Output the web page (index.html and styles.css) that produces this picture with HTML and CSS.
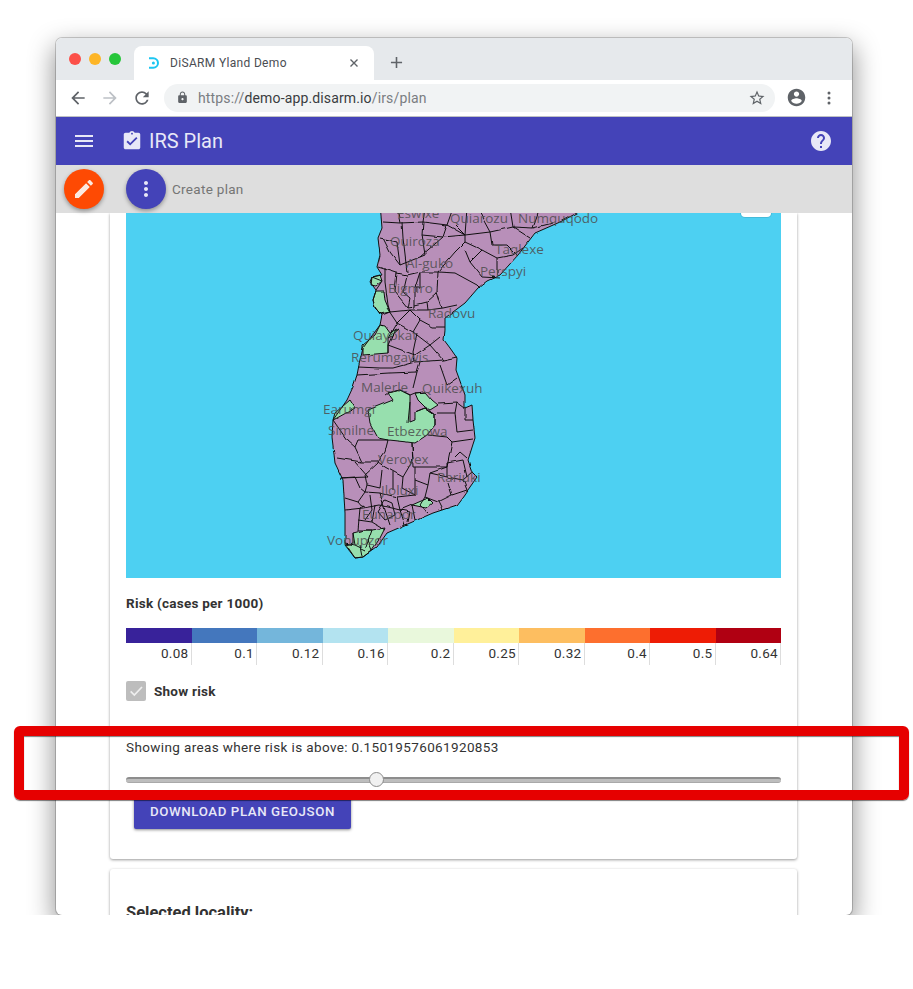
FILE: index.html
```html
<!DOCTYPE html>
<html lang="en">
<head>
<meta charset="utf-8">
<title>DiSARM Yland Demo</title>
<link rel="stylesheet" href="styles.css">
</head>
<body>
<div class="stage">
  <div class="window">
    <div class="titlebar">
      <div class="lights"><span class="light red"></span><span class="light amber"></span><span class="light green"></span></div>
      <div class="tab">
        <svg class="favicon" viewBox="0 0 12 12"><path d="M1 1.2h4.2a4.8 4.8 0 0 1 0 9.6H1" fill="none" stroke="#1cc6f2" stroke-width="2"/><circle cx="5.4" cy="6" r="1.5" fill="#1cc6f2"/></svg>
        <span class="tab-title">DiSARM Yland Demo</span>
        <svg class="tab-close" viewBox="0 0 10 10"><path d="M1.5 1.5l7 7M8.5 1.5l-7 7" stroke="#5f6368" stroke-width="1.4"/></svg>
      </div>
      <svg class="new-tab" viewBox="0 0 14 14"><path d="M7 1v12M1 7h12" stroke="#5f6368" stroke-width="1.7"/></svg>
    </div>
    <div class="toolbar">
      <svg class="nav-icon" viewBox="0 0 24 24"><path fill="#5f6368" d="M20 11H7.83l5.59-5.59L12 4l-8 8 8 8 1.41-1.41L7.83 13H20v-2z"/></svg>
      <svg class="nav-icon" viewBox="0 0 24 24"><path fill="#bdc1c6" d="M12 4l-1.41 1.41L16.17 11H4v2h12.17l-5.58 5.59L12 20l8-8z"/></svg>
      <svg class="nav-icon" viewBox="0 0 24 24"><path fill="#5f6368" d="M17.65 6.35C16.2 4.9 14.21 4 12 4c-4.42 0-7.99 3.58-7.99 8s3.57 8 7.99 8c3.73 0 6.84-2.55 7.73-6h-2.08c-.82 2.33-3.04 4-5.65 4-3.31 0-6-2.69-6-6s2.69-6 6-6c1.66 0 3.14.69 4.22 1.78L13 11h7V4l-2.35 2.35z"/></svg>
      <div class="omnibox">
        <svg class="lock" viewBox="0 0 24 24"><path fill="#5f6368" d="M18 8h-1V6c0-2.76-2.24-5-5-5S7 3.24 7 6v2H6c-1.1 0-2 .9-2 2v10c0 1.1.9 2 2 2h12c1.1 0 2-.9 2-2V10c0-1.1-.9-2-2-2zm-6 9c-1.1 0-2-.9-2-2s.9-2 2-2 2 .9 2 2-.9 2-2 2zm3.1-9H8.9V6c0-1.71 1.39-3.1 3.1-3.1 1.71 0 3.1 1.39 3.1 3.1v2z"/></svg>
        <span class="url"><span class="url-dim">https://</span>demo-app.disarm.io<span class="url-dim">/irs/plan</span></span>
        <svg class="star" viewBox="0 0 24 24"><path fill="#5f6368" d="M22 9.24l-7.19-.62L12 2 9.19 8.63 2 9.24l5.46 4.73L5.82 21 12 17.27 18.18 21l-1.63-7.03L22 9.24zM12 15.4l-3.76 2.27 1-4.28-3.32-2.88 4.38-.38L12 6.1l1.71 4.04 4.38.38-3.32 2.88 1 4.28L12 15.4z"/></svg>
      </div>
      <svg class="account" viewBox="0 0 24 24"><path fill="#5f6368" d="M12 2C6.48 2 2 6.48 2 12s4.48 10 10 10 10-4.48 10-10S17.52 2 12 2zm0 3c1.66 0 3 1.34 3 3s-1.34 3-3 3-3-1.34-3-3 1.34-3 3-3zm0 14.2c-2.5 0-4.71-1.28-6-3.22.03-1.99 4-3.08 6-3.08 1.99 0 5.97 1.09 6 3.08-1.29 1.94-3.5 3.22-6 3.22z"/></svg>
      <svg class="dots" viewBox="0 0 4 14"><circle cx="2" cy="2" r="1.5" fill="#5f6368"/><circle cx="2" cy="7" r="1.5" fill="#5f6368"/><circle cx="2" cy="12" r="1.5" fill="#5f6368"/></svg>
    </div>
    <header class="appbar">
      <svg class="menu-icon" viewBox="0 0 24 24"><path fill="#e8e8f7" d="M3 18h18v-2H3v2zm0-5h18v-2H3v2zm0-7v2h18V6H3z"/></svg>
      <svg class="plan-icon" viewBox="0 0 24 24"><path fill="#e8e8f7" d="M19 3h-4.18C14.4 1.84 13.3 1 12 1c-1.3 0-2.4.84-2.82 2H5c-1.1 0-2 .9-2 2v14c0 1.1.9 2 2 2h14c1.1 0 2-.9 2-2V5c0-1.1-.9-2-2-2zm-7 0c.55 0 1 .45 1 1s-.45 1-1 1-1-.45-1-1 .45-1 1-1zm-2 14l-4-4 1.41-1.41L10 14.17l6.59-6.59L18 9l-8 8z"/></svg>
      <span class="app-title">IRS Plan</span>
      <svg class="help-icon" viewBox="0 0 24 24"><path fill="#e8e8f7" d="M12 2C6.48 2 2 6.48 2 12s4.48 10 10 10 10-4.48 10-10S17.52 2 12 2zm1 17h-2v-2h2v2zm2.07-7.75l-.9.92C13.45 12.9 13 13.5 13 15h-2v-.5c0-1.1.45-2.1 1.17-2.83l1.24-1.26c.37-.36.59-.86.59-1.41 0-1.1-.9-2-2-2s-2 .9-2 2H8c0-2.21 1.79-4 4-4s4 1.79 4 4c0 .88-.36 1.68-.93 2.25z"/></svg>
    </header>
    <div class="actionbar">
      <button class="fab fab-edit"><svg viewBox="0 0 24 24"><path fill="#fbe9e0" d="M3 17.25V21h3.75L17.81 9.94l-3.75-3.75L3 17.25zM20.71 7.04c.39-.39.39-1.02 0-1.41l-2.34-2.34c-.39-.39-1.02-.39-1.41 0l-1.83 1.83 3.75 3.75 1.83-1.83z"/></svg></button>
      <button class="fab fab-more"><svg viewBox="0 0 24 24"><path fill="#e8e8f7" d="M12 8c1.1 0 2-.9 2-2s-.9-2-2-2-2 .9-2 2 .9 2 2 2zm0 2c-1.1 0-2 .9-2 2s.9 2 2 2 2-.9 2-2-.9-2-2-2zm0 6c-1.1 0-2 .9-2 2s.9 2 2 2 2-.9 2-2-.9-2-2-2z"/></svg></button>
      <span class="action-label">Create plan</span>
    </div>
    <main class="content">
      <section class="card card-main">
        <div class="map">
          <svg class="map-svg" viewBox="126 213 655 365">
            <defs>
              <filter id="wiggle" filterUnits="userSpaceOnUse" x="300" y="195" width="320" height="385">
                <feTurbulence type="fractalNoise" baseFrequency="0.09" numOctaves="1" seed="4" result="noise"/>
                <feDisplacementMap in="SourceGraphic" in2="noise" scale="3" xChannelSelector="R" yChannelSelector="G"/>
              </filter>
            </defs>
            <g filter="url(#wiggle)">
            <polygon class="land" points="380,203 595,203 577,213 560,222 535,233 518,255 500,275 487,281 478,288 465,303 445,318 445,330 444,340 450,348 457,358 456,370 465,395 465,408 472,405 473,420 475,438 468,460 472,472 477,477 470,487 463,497 457,505 433,513 410,523 387,533 377,547 363,557 355,558 345,543 345,513 343,480 335,463 332,437 333,420 347,400 353,387 357,375 359,365 363,348 380,325 382,315 375,308 373,300 376,290 370,282 372,277 382,275 377,267 380,255 378,238 382,228"/>
            <g class="green">
              <polygon points="372,277 380,275 382,281 376,286 371,285"/>
              <polygon points="376,291 384,291 385,300 390,312 380,314 375,307 373,300"/>
              <polygon points="380,325 385,326 390,333 398,329 392,336 388,338 388,353 363,355 363,345 375,335"/>
              <polygon points="368,410 393,400 388,393 400,390 410,395 410,422 415,420 415,412 425,408 435,415 435,425 427,435 415,443 407,442 388,440 378,438 370,423"/>
              <polygon points="415,393 425,392 432,400 438,405 430,410 425,407 418,400"/>
              <polygon points="333,420 335,413 350,400 355,408 337,418"/>
              <polygon points="412,505 428,498 433,503 427,508"/>
              <polygon points="353,533 365,530 372,530 385,528 380,538 372,550 363,557 355,558 345,545 353,543"/>
            </g>
            <g class="lines">
              <polyline points="383,222 400,223 423,222 447,225 465,235 490,232 513,227 533,228 553,223"/>
              <polyline points="383,238 390,252 400,265 420,257 443,237 465,235"/>
              <polyline points="402,222 403,238 407,272"/>
              <polyline points="423,222 422,235 443,237"/>
              <polyline points="465,242 455,252 438,272 437,292 442,308"/>
              <polyline points="465,235 465,242 482,250 470,262 465,250"/>
              <polyline points="482,250 497,258 513,255 523,248"/>
              <polyline points="490,232 492,245 507,245 517,255"/>
              <polyline points="513,227 530,238"/>
              <polyline points="438,272 455,273 477,285 480,288"/>
              <polyline points="470,262 482,277 500,278"/>
              <polyline points="497,258 497,275"/>
              <polyline points="378,267 397,273 407,275 420,272 438,272"/>
              <polyline points="385,268 385,282 388,305 390,312"/>
              <polyline points="397,273 395,292 408,308 415,307 415,288 420,272"/>
              <polyline points="382,315 390,312 410,310 428,310 443,308 457,305"/>
              <polyline points="437,293 427,302 428,310"/>
              <polyline points="410,310 420,320 413,332 397,323 410,310"/>
              <polyline points="420,320 433,327 445,327"/>
              <polyline points="413,332 430,345 440,337"/>
              <polyline points="417,333 413,352 415,362"/>
              <polyline points="388,345 415,355 430,345"/>
              <polyline points="430,345 443,360 457,357"/>
              <polyline points="358,367 380,368 393,368 415,362 443,360"/>
              <polyline points="357,375 390,373 417,372 420,362"/>
              <polyline points="417,372 413,388"/>
              <polyline points="440,365 447,385 457,378"/>
              <polyline points="388,353 388,345 395,330"/>
              <polyline points="372,277 382,281 376,290"/>
              <polyline points="380,238 397,242 400,265"/>
              <polyline points="422,235 425,255 420,257"/>
              <polyline points="447,225 443,237"/>
              <polyline points="455,225 465,235"/>
              <polyline points="400,223 397,208"/>
              <polyline points="423,222 425,208"/>
              <polyline points="447,225 453,208"/>
              <polyline points="490,232 477,208"/>
              <polyline points="513,227 510,208"/>
              <polyline points="533,228 540,208"/>
              <polyline points="467,208 465,235"/>
              <polyline points="407,275 403,292 410,298 408,308"/>
              <polyline points="420,272 420,288 415,288"/>
              <polyline points="427,302 415,305"/>
              <polyline points="387,308 397,323 388,338"/>
              <polyline points="410,402 408,423"/>
              <polyline points="438,403 457,402 465,408"/>
              <polyline points="457,402 455,413 437,413"/>
              <polyline points="455,413 457,432 473,430"/>
              <polyline points="465,408 465,420 473,420"/>
              <polyline points="412,443 413,467 447,467 452,442 473,439"/>
              <polyline points="428,435 447,437 452,442"/>
              <polyline points="333,420 347,440 355,447 358,440 388,440"/>
              <polyline points="355,447 362,462 337,458"/>
              <polyline points="362,462 378,462 385,452 388,440"/>
              <polyline points="412,443 413,460 403,477 385,467 378,462"/>
              <polyline points="355,462 368,477 340,478"/>
              <polyline points="378,463 365,475 367,485 380,488 382,470"/>
              <polyline points="393,472 393,490"/>
              <polyline points="403,477 402,488 415,495 415,467"/>
              <polyline points="415,480 428,485 430,473 447,467"/>
              <polyline points="430,473 447,477 463,480 472,472"/>
              <polyline points="428,485 425,497 438,502 452,495 448,482"/>
              <polyline points="452,495 467,490 463,480"/>
              <polyline points="447,463 447,477"/>
              <polyline points="463,460 467,477"/>
              <polyline points="447,463 463,460"/>
              <polyline points="455,457 460,452 467,458"/>
              <polyline points="340,478 355,477 360,488 365,492 367,485"/>
              <polyline points="345,498 358,502 365,492"/>
              <polyline points="358,502 363,508 345,510"/>
              <polyline points="365,492 380,493 397,497 415,495"/>
              <polyline points="363,508 380,505 400,510 412,505"/>
              <polyline points="380,493 385,510 390,525"/>
              <polyline points="397,497 400,510 405,525"/>
              <polyline points="375,505 372,522 385,530"/>
              <polyline points="358,520 372,522"/>
              <polyline points="360,508 358,530 372,530"/>
              <polyline points="412,505 415,520"/>
              <polyline points="425,497 420,505 428,512"/>
              <polyline points="370,495 372,510 365,520"/>
              <polyline points="385,500 392,503 395,515 385,520 378,512 385,500"/>
              <polyline points="400,510 410,512 408,522"/>
              <polyline points="438,502 442,510"/>
              <polyline points="353,533 355,545 365,550 372,530"/>
              <polyline points="360,545 362,556"/>
              <polyline points="368,540 372,550"/>
              <polyline points="345,543 355,545"/>
              <polyline points="385,395 388,393 400,390 410,395 415,393 425,392"/>
              <polyline points="415,412 425,408 435,415 435,425"/>
            </g>
            <polygon class="coast" points="380,203 595,203 577,213 560,222 535,233 518,255 500,275 487,281 478,288 465,303 445,318 445,330 444,340 450,348 457,358 456,370 465,395 465,408 472,405 473,420 475,438 468,460 472,472 477,477 470,487 463,497 457,505 433,513 410,523 387,533 377,547 363,557 355,558 345,543 345,513 343,480 335,463 332,437 333,420 347,400 353,387 357,375 359,365 363,348 380,325 382,315 375,308 373,300 376,290 370,282 372,277 382,275 377,267 380,255 378,238 382,228"/>
            </g>
            <g class="labels">
              <text x="397" y="218">Eswixe</text>
              <text x="450" y="223">Quiarozu</text>
              <text x="518" y="223">Numquqodo</text>
              <text x="390" y="246">Quiroza</text>
              <text x="495" y="254">Taqlexe</text>
              <text x="406" y="268">Al-guko</text>
              <text x="480" y="276">Perspyi</text>
              <text x="388" y="293">Bigniro</text>
              <text x="428" y="318">Radovu</text>
              <text x="353" y="340">Quiayokat</text>
              <text x="351" y="362">Rerumgawis</text>
              <text x="361" y="392">Malerle</text>
              <text x="422" y="393">Quikexuh</text>
              <text x="323" y="414">Earumgi</text>
              <text x="328" y="435">Similne</text>
              <text x="387" y="436">Etbezowa</text>
              <text x="378" y="464">Veroyex</text>
              <text x="437" y="482">Rariuki</text>
              <text x="381" y="495">Jloluxi</text>
              <text x="362" y="519">Eunapor</text>
              <text x="327" y="545">Vonupzor</text>
            </g>
          </svg>
          <div class="map-control"></div>
        </div>
        <p class="legend-title">Risk (cases per 1000)</p>
        <div class="legend">
          <div class="legend-cell"><span class="swatch c1"></span><span class="tick">0.08</span></div>
          <div class="legend-cell"><span class="swatch c2"></span><span class="tick">0.1</span></div>
          <div class="legend-cell"><span class="swatch c3"></span><span class="tick">0.12</span></div>
          <div class="legend-cell"><span class="swatch c4"></span><span class="tick">0.16</span></div>
          <div class="legend-cell"><span class="swatch c5"></span><span class="tick">0.2</span></div>
          <div class="legend-cell"><span class="swatch c6"></span><span class="tick">0.25</span></div>
          <div class="legend-cell"><span class="swatch c7"></span><span class="tick">0.32</span></div>
          <div class="legend-cell"><span class="swatch c8"></span><span class="tick">0.4</span></div>
          <div class="legend-cell"><span class="swatch c9"></span><span class="tick">0.5</span></div>
          <div class="legend-cell"><span class="swatch c10"></span><span class="tick">0.64</span></div>
        </div>
        <div class="check-row">
          <span class="checkbox"><svg viewBox="0 0 24 24"><path fill="none" stroke="#eee" stroke-width="2.6" d="M4 12.5l5.5 5.5L21 6"/></svg></span>
          <span class="check-label">Show risk</span>
        </div>
        <p class="threshold">Showing areas where risk is above: 0.15019576061920853</p>
        <div class="slider"><span class="slider-thumb"></span></div>
        <button class="download">DOWNLOAD PLAN GEOJSON</button>
      </section>
      <section class="card card-next">
        <h2 class="locality">Selected locality:</h2>
      </section>
    </main>
  </div>
</div>
<div class="highlight"></div>
</body>
</html>
```

FILE: styles.css
```css
* { box-sizing: border-box; }
html, body { margin: 0; padding: 0; background: #fff; }
body { font-family: Roboto, "Liberation Sans", sans-serif; color: #222; position: relative; height: 989px; overflow: hidden; }

.stage { height: 915px; padding: 38px 0 0 56px; overflow: hidden; background: #fff; }
.window { width: 796px; height: 877px; border-radius: 6px; overflow: hidden; display: flex; flex-direction: column; background: #fff; box-shadow: 0 0 0 1px rgba(0,0,0,.18), 0 10px 26px 2px rgba(0,0,0,.42); }

.titlebar { flex: none; height: 42px; background: #e6e9ec; display: flex; align-items: flex-end; }
.lights { display: flex; gap: 8px; padding: 0 0 15px 13px; width: 78px; }
.light { width: 12px; height: 12px; border-radius: 50%; }
.red { background: #fc5049; }
.amber { background: #fdb526; }
.green { background: #26c63a; }
.tab { width: 240px; height: 34px; background: #fff; border-radius: 8px 8px 0 0; display: flex; align-items: center; padding: 0 15px 0 14px; }
.favicon { width: 12px; height: 12px; flex: none; }
.tab-title { flex: 1; margin-left: 10px; font-size: 12px; letter-spacing: .33px; color: #4a4d52; white-space: nowrap; }
.tab-close { width: 10px; height: 10px; flex: none; }
.new-tab { width: 13px; height: 13px; margin: 0 0 11px 16px; }

.toolbar { flex: none; height: 37px; background: #fff; border-bottom: 1px solid #bfc1c4; display: flex; align-items: center; padding: 0 0 1px 12px; }
.nav-icon { width: 20px; height: 20px; margin-right: 12px; flex: none; }
.omnibox { width: 611px; height: 28px; background: #f1f3f4; border-radius: 14px; display: flex; align-items: center; padding: 0 9px 0 12px; }
.lock { width: 13px; height: 13px; flex: none; }
.url { flex: 1; margin-left: 9px; font-size: 14px; letter-spacing: .14px; color: #3a3c40; white-space: nowrap; }
.url-dim { color: #7a7d81; }
.star { width: 18px; height: 18px; flex: none; }
.account { width: 21px; height: 21px; flex: none; margin-left: 11px; }
.dots { width: 4px; height: 14px; flex: none; margin-left: 20px; }

.appbar { flex: none; height: 48px; background: #4443b8; display: flex; align-items: center; padding: 0 19px 0 16px; }
.menu-icon { width: 24px; height: 24px; flex: none; }
.plan-icon { width: 22px; height: 22px; flex: none; margin-left: 25px; }
.app-title { flex: 1; margin-left: 6px; font-size: 20px; color: #e8e8f7; }
.help-icon { width: 24px; height: 24px; flex: none; }

.actionbar { flex: none; height: 48px; background: #dedede; display: flex; align-items: center; padding-left: 8px; }
.fab { width: 40px; height: 40px; padding: 8px; border: 0; border-radius: 50%; box-shadow: 0 2px 4px rgba(0,0,0,.35); display: block; flex: none; }
.fab svg { display: block; width: 24px; height: 24px; }
.fab-edit { background: #fe4a03; }
.fab-more { background: #4443b8; margin-left: 22px; }
.action-label { margin-left: 6px; font-size: 13.5px; letter-spacing: .3px; color: #757575; }

.content { flex: 1; min-height: 0; overflow: hidden; padding: 0 55px 0 54px; }
.card { background: #fff; border-radius: 0 0 3px 3px; box-shadow: 0 1px 3px rgba(0,0,0,.4); padding: 0 16px; }
.card-main { height: 646px; }
.card-next { margin-top: 10px; padding-top: 34px; border-radius: 3px; height: 200px; }

.map { position: relative; height: 365px; background: #4dd0f2; overflow: hidden; }
.map-svg { display: block; width: 655px; height: 365px; }
.land { fill: #b88fb9; }
.green polygon { fill: #97dfae; stroke: #111; stroke-width: 1; }
.lines polyline { fill: none; stroke: #111; stroke-width: 1; stroke-linejoin: round; }
.coast { fill: none; stroke: #111; stroke-width: 1; }
.labels text { font-family: "Open Sans", "Noto Sans", sans-serif; font-size: 13.5px; fill: #4c4c4c; fill-opacity: .85; }
.map-control { position: absolute; top: -26px; left: 615px; width: 30px; height: 30px; background: #fff; border-radius: 4px; box-shadow: 0 0 0 1px rgba(0,0,0,.1); }

.legend-title { margin: 18px 0 0; font-size: 13.5px; line-height: 15px; font-weight: 700; letter-spacing: .25px; color: #333; }
.legend { display: grid; grid-template-columns: repeat(10, 1fr); margin-top: 17px; }
.legend-cell { display: flex; flex-direction: column; }
.swatch { display: block; height: 15px; }
.c1 { background: #38229a; }
.c2 { background: #4477bd; }
.c3 { background: #74b6db; }
.c4 { background: #b3e3f0; }
.c5 { background: #e9f8dc; }
.c6 { background: #fff09a; }
.c7 { background: #fdbe60; }
.c8 { background: #fd6f2e; }
.c9 { background: #ee1c05; }
.c10 { background: #b00012; }
.tick { display: block; height: 22px; border-right: 1px solid #ddd; text-align: right; padding: 2px 2px 0 0; font-size: 13.5px; line-height: 16px; letter-spacing: .3px; color: #333; }

.check-row { display: flex; align-items: center; margin-top: 16px; }
.checkbox { width: 20px; height: 20px; border-radius: 2px; background: #bdbdbd; display: block; padding: 2px; }
.checkbox svg { display: block; width: 16px; height: 16px; }
.check-label { margin-left: 8px; font-size: 13.5px; font-weight: 700; letter-spacing: .25px; color: #333; }

.threshold { margin: 38px 0 0; font-size: 13.5px; line-height: 16px; letter-spacing: .37px; color: #333; }
.slider { position: relative; height: 6px; margin-top: 22px; border-radius: 3px; background: #bdbdbd; border-top: 2px solid #8d8d8d; border-bottom: 1px solid #a9a9a9; }
.slider-thumb { position: absolute; left: 243px; top: -7px; width: 15px; height: 15px; border-radius: 50%; background: #f1f1f1; border: 1px solid #8c8c8c; }
.download { display: block; width: 217px; height: 36px; margin: 10px 0 0 8px; border: 0; border-radius: 2px; background: #4443b8; color: #e8e8f7; font-family: inherit; font-size: 13.3px; font-weight: 500; letter-spacing: .58px; box-shadow: 0 1px 3px rgba(0,0,0,.45); }
.locality { margin: 0; font-size: 16.5px; line-height: 20px; font-weight: 700; color: #333; }

.highlight { position: absolute; left: 14px; top: 726px; width: 895px; height: 74px; border: 10px solid #e60000; border-radius: 6px; box-shadow: 0 1px 1px rgba(0,0,0,.5), inset 0 1px 1px rgba(0,0,0,.5); }
```
